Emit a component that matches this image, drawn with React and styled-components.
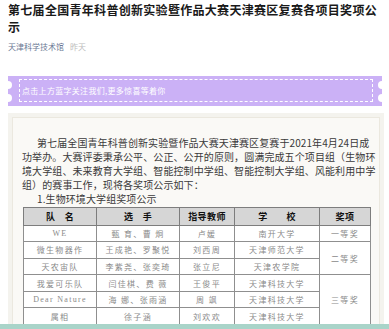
import React from "react";
import styled, { createGlobalStyle } from "styled-components";

const GlobalStyle = createGlobalStyle`
  html, body {
    margin: 0;
    padding: 0;
    background: #fff;
    overflow: hidden;
  }
  body {
    font-family: "Noto Sans CJK SC", "Noto Sans", sans-serif;
  }
`;

const Page = styled.div`
  padding: 2px 5px 0 8px;
`;

const Title = styled.h1`
  margin: 0;
  font-size: 12px;
  line-height: 16.5px;
  letter-spacing: 0.3px;
  font-weight: 700;
  color: #1a1a1a;
`;

const Meta = styled.div`
  margin-top: 7px;
  display: flex;
  gap: 6px;
  font-size: 8px;
  line-height: 10px;
`;

const Author = styled.span`
  color: #6b7894;
`;

const When = styled.span`
  color: #bdbdbd;
`;

const Banner = styled.div`
  position: relative;
  margin: 24px 2px 0 0;
  height: 30px;
  background: #cbb1f6;
  display: flex;
`;

const Notch = styled.span`
  position: absolute;
  top: ${(p) => p.top}px;
  ${(p) => (p.side === "left" ? "left: -4px;" : "right: -4px;")}
  width: 8px;
  height: 8px;
  border-radius: 50%;
  background: #fff;
`;

const BannerInner = styled.div`
  flex: 1;
  margin: 3px 9px 4px 11px;
  border: 1px dashed #fff;
  padding-left: 2px;
  display: flex;
  align-items: center;
  color: #fff;
  font-size: 8px;
  letter-spacing: 0.3px;
`;

const ContentOuter = styled.div`
  margin-top: 7px;
  padding: 4px;
  background: #f4f3ee;
`;

const ContentInner = styled.div`
  border: 1px solid #ebe8df;
  background: #faf9f6;
  padding: 18px 0 20px 9px;
`;

const Paragraph = styled.p`
  margin: 0;
  width: 355px;
  font-size: 10px;
  line-height: 14px;
  letter-spacing: 0.1px;
  color: #3a3a3a;
  text-indent: ${(p) => p.indent || 0}px;
`;

const Table = styled.table`
  margin: 1px 0 0 1px;
  width: 347px;
  border-collapse: collapse;
  table-layout: fixed;
`;

const HeadCell = styled.th`
  height: 16.5px;
  padding: 0;
  border: 1px solid #7d7d7d;
  background: #d6d6d6;
  color: #111;
  font-size: 9px;
  font-weight: 700;
  letter-spacing: 0.4px;
  text-align: center;
  white-space: pre;
`;

const Cell = styled.td`
  height: 15.6px;
  padding: 0;
  border: 1px solid #8f8f8f;
  background: #fff;
  color: #8a8a8a;
  font-family: "Liberation Serif", "Noto Sans CJK SC", serif;
  font-size: 8px;
  letter-spacing: 1.3px;
  text-align: center;
  white-space: pre;
`;

const BottomBar = styled.div`
  position: fixed;
  left: 0;
  right: 0;
  bottom: 0;
  height: 5px;
  background: #a9d4c9;
`;

const widths = [73, 83, 55, 85, 51];
const headers = ["队　名", "选　手", "指导教师", "学　　校", "奖项"];

const rows = [
  { team: "WE", members: "甄 育、曹 炯", teacher: "卢媛", school: "南开大学", award: "一等奖", span: 1 },
  { team: "微生物器作", members: "王成艳、罗聚悦", teacher: "刘西周", school: "天津师范大学", award: "二等奖", span: 2 },
  { team: "天农宙队", members: "李紫尧、张奕琦", teacher: "张立尼", school: "天津农学院" },
  { team: "我爱可乐队", members: "闫佳棋、费 薇", teacher: "王俊平", school: "天津科技大学", award: "三等奖", span: 3 },
  { team: "Dear Nature", members: "海 娜、张雨涵", teacher: "周 飒", school: "天津科技大学" },
  { team: "属相", members: "徐子涵", teacher: "刘欢欢", school: "天津科技大学" },
];

export default function App() {
  return (
    <>
      <GlobalStyle />
      <Page>
        <Title>第七届全国青年科普创新实验暨作品大赛天津赛区复赛各项目奖项公示</Title>
        <Meta>
          <Author>天津科学技术馆</Author>
          <When>昨天</When>
        </Meta>
        <Banner>
          <Notch side="left" top={5} />
          <Notch side="left" top={18} />
          <Notch side="right" top={5} />
          <Notch side="right" top={18} />
          <BannerInner>点击上方蓝字关注我们,更多惊喜等着你</BannerInner>
        </Banner>
        <ContentOuter>
          <ContentInner>
            <Paragraph indent={15}>
              第七届全国青年科普创新实验暨作品大赛天津赛区复赛于2021年4月24日成功举办。大赛评委秉承公平、公正、公开的原则，圆满完成五个项目组（生物环境大学组、未来教育大学组、智能控制中学组、智能控制大学组、风能利用中学组）的赛事工作，现将各奖项公示如下：
            </Paragraph>
            <Paragraph indent={15}>1.生物环境大学组奖项公示</Paragraph>
            <Table>
              <colgroup>
                {widths.map((w, i) => (
                  <col key={i} style={{ width: w }} />
                ))}
              </colgroup>
              <thead>
                <tr>
                  {headers.map((h) => (
                    <HeadCell key={h}>{h}</HeadCell>
                  ))}
                </tr>
              </thead>
              <tbody>
                {rows.map((r) => (
                  <tr key={r.team}>
                    <Cell>{r.team}</Cell>
                    <Cell>{r.members}</Cell>
                    <Cell>{r.teacher}</Cell>
                    <Cell>{r.school}</Cell>
                    {r.award && <Cell rowSpan={r.span}>{r.award}</Cell>}
                  </tr>
                ))}
              </tbody>
            </Table>
          </ContentInner>
        </ContentOuter>
      </Page>
      <BottomBar />
    </>
  );
}
